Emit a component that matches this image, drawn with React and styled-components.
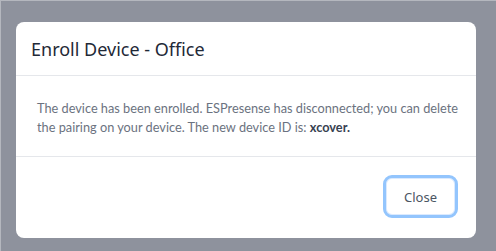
import styled, { createGlobalStyle } from "styled-components";

const GlobalStyle = createGlobalStyle`
  html, body {
    margin: 0;
    padding: 0;
    height: 100%;
  }
  #root {
    height: 100%;
  }
`;

const Backdrop = styled.div`
  box-sizing: border-box;
  width: 496px;
  height: 251px;
  background-color: #8e929d;
  border-top: 1px solid #b4b7be;
  border-left: 1px solid #b4b7be;
  padding: 21px 19px 0 15px;
  font-family: "Noto Sans", "Open Sans", sans-serif;
`;

const Modal = styled.div`
  width: 460px;
  height: 216px;
  background: #fff;
  border-radius: 8px;
  display: flex;
  flex-direction: column;
  overflow: hidden;
`;

const Header = styled.div`
  height: 54px;
  box-sizing: border-box;
  padding: 0 15px;
  display: flex;
  align-items: center;
  border-bottom: 1px solid #e5e7eb;
`;

const Title = styled.h3`
  margin: 0;
  font-size: 18px;
  font-weight: 400;
  color: #1f2937;
`;

const Body = styled.div`
  height: 81px;
  box-sizing: border-box;
  padding: 23px 16px 0 21px;
  border-bottom: 1px solid #e5e7eb;
`;

const Text = styled.p`
  margin: 0;
  font-family: Lato, "Noto Sans", sans-serif;
  font-size: 12.75px;
  line-height: 19px;
  color: #6b7280;

  strong {
    color: #374151;
    font-weight: 700;
  }
`;

const Footer = styled.div`
  flex: 1;
  display: flex;
  justify-content: flex-end;
  align-items: center;
  padding: 0 18px 2px 0;
`;

const Button = styled.button`
  width: 75px;
  height: 43px;
  box-sizing: border-box;
  border: 3px solid #93c5fd;
  border-radius: 9px;
  background: #fff;
  box-shadow: inset 0 0 0 1px #dbeafe;
  font-family: inherit;
  font-size: 13px;
  color: #4b5563;
  cursor: pointer;
`;

export default function App() {
  return (
    <>
      <GlobalStyle />
      <Backdrop>
        <Modal>
          <Header>
            <Title>Enroll Device - Office</Title>
          </Header>
          <Body>
            <Text>
              The device has been enrolled. ESPresense has disconnected; you can delete the
              pairing on your device. The new device ID is: <strong>xcover.</strong>
            </Text>
          </Body>
          <Footer>
            <Button>Close</Button>
          </Footer>
        </Modal>
      </Backdrop>
    </>
  );
}
